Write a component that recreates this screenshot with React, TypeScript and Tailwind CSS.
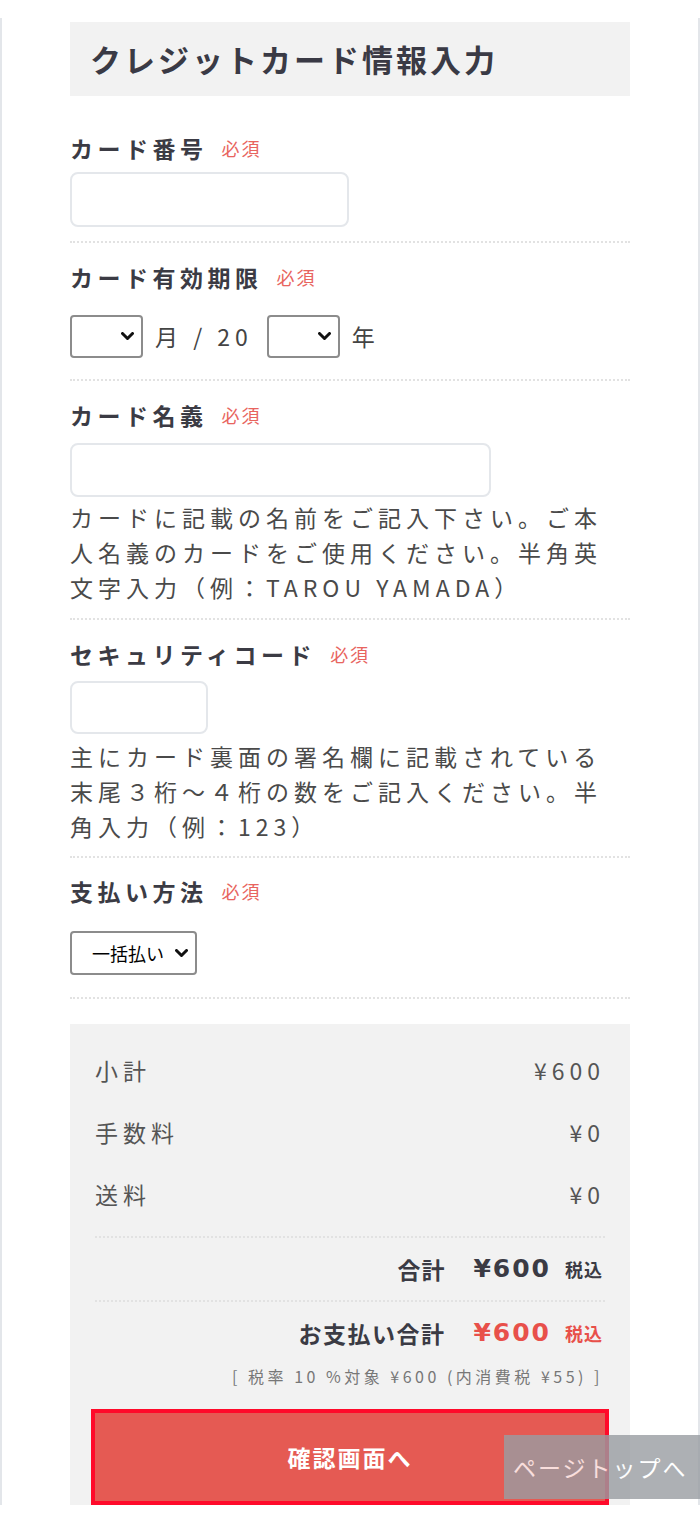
import React from "react";

const Required = () => (
  <span className="ml-[14px] text-[18px] font-normal tracking-[2px] text-[#e8645e]">必須</span>
);

const Label = ({ children, className = "" }: { children: React.ReactNode; className?: string }) => (
  <div className={`flex items-center h-[32px] text-[23px] font-bold tracking-[4.5px] text-[#3b3b44] ${className}`}>
    {children}
    <Required />
  </div>
);

const Divider = ({ className = "" }: { className?: string }) => (
  <div className={`border-t-2 border-dotted border-[#e2e2e2] ${className}`} />
);

const Chevron = () => (
  <svg width="13" height="9" viewBox="0 0 13 9" className="shrink-0">
    <polyline points="1.5,1.5 6.5,6.5 11.5,1.5" fill="none" stroke="#111" strokeWidth="3" strokeLinecap="round" strokeLinejoin="round" />
  </svg>
);

const SelectBox = ({ width, children }: { width: string; children?: React.ReactNode }) => (
  <div className={`flex items-center justify-between h-[43px] ${width} border-2 border-[#8c8c8c] rounded-[4px] bg-white pl-[20px] pr-[7px]`}>
    <span className="text-[18px] tracking-normal text-black">{children}</span>
    <Chevron />
  </div>
);

const Row = ({ label, value }: { label: string; value: string }) => (
  <div className="flex items-center justify-between h-[62px] text-[23px] tracking-[5px] text-[#555]">
    <span>{label}</span>
    <span>{value}</span>
  </div>
);

export default function App() {
  return (
    <div className="relative w-[700px] h-[1527px] bg-white pt-[18px] font-['Noto_Sans_CJK_JP','Liberation_Sans',sans-serif]">
      <div className="border-x-2 border-[#e3e6ea] px-[68px] pt-[4px]">
        <div className="flex items-center h-[74px] bg-[#f2f2f2] pl-[20px] text-[31px] font-bold tracking-[3px] text-[#3a3a45]">
          クレジットカード情報入力
        </div>

        {/* card number */}
        <Label className="mt-[36px]">カード番号</Label>
        <div className="mt-[8px] w-[279px] h-[55px] border-2 border-[#e4e7eb] rounded-[8px]" />
        <Divider className="mt-[14px]" />

        {/* expiry */}
        <Label className="mt-[18px]">カード有効期限</Label>
        <div className="mt-[22px] flex items-center text-[23px] tracking-[5px] text-[#444]">
          <SelectBox width="w-[73px]" />
          <span className="ml-[12px]">月 / 20</span>
          <span className="ml-[14px]">
            <SelectBox width="w-[73px]" />
          </span>
          <span className="ml-[12px]">年</span>
        </div>
        <Divider className="mt-[21px]" />

        {/* name */}
        <Label className="mt-[18px]">カード名義</Label>
        <div className="mt-[12px] w-[421px] h-[54px] border-2 border-[#e4e7eb] rounded-[8px]" />
        <p className="mt-[3px] text-[23px] leading-[35px] tracking-[5px] text-[#4a4a4a]">
          カードに記載の名前をご記入下さい。ご本
          <br />
          人名義のカードをご使用ください。半角英
          <br />
          文字入力（例：TAROU YAMADA）
        </p>
        <Divider className="mt-[13px]" />

        {/* security code */}
        <Label className="mt-[18px]">セキュリティコード</Label>
        <div className="mt-[11px] w-[138px] h-[53px] border-2 border-[#e4e7eb] rounded-[8px]" />
        <p className="mt-[5px] text-[23px] leading-[35px] tracking-[5px] text-[#4a4a4a]">
          主にカード裏面の署名欄に記載されている
          <br />
          末尾３桁～４桁の数をご記入ください。半
          <br />
          角入力（例：123）
        </p>
        <Divider className="mt-[12px]" />

        {/* payment method */}
        <Label className="mt-[17px]">支払い方法</Label>
        <div className="mt-[24px]">
          <SelectBox width="w-[127px] h-[44px]">一括払い</SelectBox>
        </div>
        <Divider className="mt-[22px]" />

        {/* summary */}
        <div className="mt-[25px] bg-[#f2f2f2] px-[25px] pt-[15px] pb-[4px]">
          <Row label="小計" value="¥600" />
          <Row label="手数料" value="¥0" />
          <Row label="送料" value="¥0" />
          <Divider className="mt-[11px]" />
          <div className="flex items-center justify-end h-[62px] pr-[2px] text-[#3b3b44]">
            <span className="text-[23px] font-bold tracking-[1px]">合計</span>
            <span className="ml-[28px] font-['DejaVu_Sans',sans-serif] text-[25px] font-bold tracking-[2px]">¥600</span>
            <span className="ml-[14px] text-[18px] font-bold tracking-[1px]">税込</span>
          </div>
          <Divider />
          <div className="flex items-center justify-end h-[62px] pr-[2px]">
            <span className="text-[23px] font-bold tracking-[1.5px] text-[#3b3b44]">お支払い合計</span>
            <span className="ml-[28px] font-['DejaVu_Sans',sans-serif] text-[25px] font-bold tracking-[2px] text-[#e8504a]">¥600</span>
            <span className="ml-[14px] text-[18px] font-bold tracking-[1px] text-[#e8504a]">税込</span>
          </div>
          <div className="flex justify-end h-[24px] items-center pr-[2px] text-[16px] tracking-[3.5px] text-[#777]">
            [ 税率 10 %対象 ¥600 (内消費税 ¥55) ]
          </div>
          <button className="mt-[25px] flex w-full h-[88px] items-center justify-center bg-[#e55a53] outline-4 outline-[#ff0a2a] text-[23px] font-bold tracking-[2px] text-white">
            確認画面へ
          </button>
        </div>
      </div>

      {/* page top overlay */}
      <div className="absolute left-[504px] top-[1435px] flex h-[64px] w-[196px] items-center bg-[#999da2] pl-[9px] text-[23px] tracking-[2px] text-white opacity-80">
        ページトップへ
      </div>
    </div>
  );
}
